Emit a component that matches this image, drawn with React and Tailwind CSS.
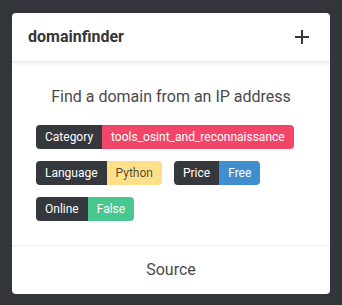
const Tag = ({ label, value, color }) => (
  <div className="flex h-6 text-xs leading-6 rounded overflow-hidden">
    <span className="bg-[#35383d] text-white px-[9px]">{label}</span>
    <span className={`px-[9px] ${color}`}>{value}</span>
  </div>
)

export default function App() {
  return (
    <div className="min-h-[305px] bg-[#323539] px-3 pt-[13px] pb-[11px] font-['Roboto',sans-serif]">
      <div className="bg-white rounded overflow-hidden">
        <header className="flex items-center justify-between h-12 px-4 shadow-[0_2px_4px_rgba(10,10,10,0.1)] relative">
          <span className="font-bold text-base text-[#363636]">domainfinder</span>
          <svg width="14" height="14" viewBox="0 0 14 14" className="mr-[5px]">
            <path d="M7 0v14M0 7h14" stroke="#363636" strokeWidth="2" />
          </svg>
        </header>
        <div className="px-6 pt-6 pb-6">
          <p className="text-center text-base leading-6 text-[#4a4a4a]">Find a domain from an IP address</p>
          <div className="mt-4 flex flex-col gap-3">
            <div className="flex">
              <Tag label="Category" value="tools_osint_and_reconnaissance" color="bg-[#f14668] text-white" />
            </div>
            <div className="flex gap-3">
              <Tag label="Language" value="Python" color="bg-[#ffe08a] text-black/70" />
              <Tag label="Price" value="Free" color="bg-[#3e8ed0] text-white" />
            </div>
            <div className="flex">
              <Tag label="Online" value="False" color="bg-[#48c78e] text-white" />
            </div>
          </div>
        </div>
        <footer className="border-t border-[#ededed] h-[49px] flex items-center justify-center text-base text-[#4a4a4a]">
          Source
        </footer>
      </div>
    </div>
  )
}
